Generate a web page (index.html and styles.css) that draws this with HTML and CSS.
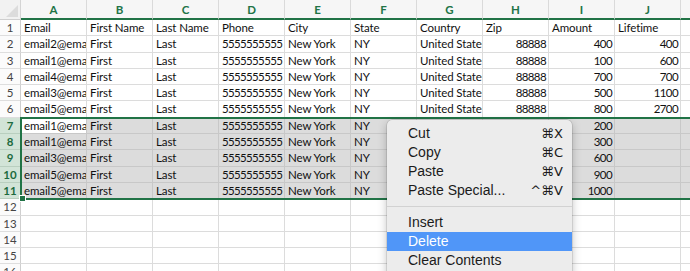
FILE: index.html
```html
<!DOCTYPE html>
<html lang="en">
<head>
    <meta charset="UTF-8">
    <title>Sheet</title>
    <link rel="stylesheet" href="styles.css">
</head>
<body>
    <div class="sheet">
        <div class="hdr">
            <div class="corner"></div>
            <div class="col">A</div><div class="col">B</div><div class="col">C</div><div class="col">D</div><div class="col">E</div>
            <div class="col">F</div><div class="col">G</div><div class="col">H</div><div class="col">I</div><div class="col">J</div><div class="col"></div>
        </div>

        <div class="row"><div class="rh">1</div><div class="c">Email</div><div class="c">First Name</div><div class="c">Last Name</div><div class="c">Phone</div><div class="c">City</div><div class="c">State</div><div class="c">Country</div><div class="c">Zip</div><div class="c">Amount</div><div class="c">Lifetime</div><div class="c"></div></div>
        <div class="row"><div class="rh">2</div><div class="c">email2@email.com</div><div class="c">First</div><div class="c">Last</div><div class="c ph">5555555555</div><div class="c">New York</div><div class="c">NY</div><div class="c">United States</div><div class="c num">88888</div><div class="c num">400</div><div class="c num">400</div><div class="c"></div></div>
        <div class="row"><div class="rh">3</div><div class="c">email1@email.com</div><div class="c">First</div><div class="c">Last</div><div class="c ph">5555555555</div><div class="c">New York</div><div class="c">NY</div><div class="c">United States</div><div class="c num">88888</div><div class="c num">100</div><div class="c num">600</div><div class="c"></div></div>
        <div class="row"><div class="rh">4</div><div class="c">email4@email.com</div><div class="c">First</div><div class="c">Last</div><div class="c ph">5555555555</div><div class="c">New York</div><div class="c">NY</div><div class="c">United States</div><div class="c num">88888</div><div class="c num">700</div><div class="c num">700</div><div class="c"></div></div>
        <div class="row"><div class="rh">5</div><div class="c">email3@email.com</div><div class="c">First</div><div class="c">Last</div><div class="c ph">5555555555</div><div class="c">New York</div><div class="c">NY</div><div class="c">United States</div><div class="c num">88888</div><div class="c num">500</div><div class="c num">1100</div><div class="c"></div></div>
        <div class="row"><div class="rh">6</div><div class="c">email5@email.com</div><div class="c">First</div><div class="c">Last</div><div class="c ph">5555555555</div><div class="c">New York</div><div class="c">NY</div><div class="c">United States</div><div class="c num">88888</div><div class="c num">800</div><div class="c num">2700</div><div class="c"></div></div>

        <div class="selection">
            <div class="row"><div class="rh">7</div><div class="c active">email1@email.com</div><div class="c">First</div><div class="c">Last</div><div class="c ph">5555555555</div><div class="c">New York</div><div class="c">NY</div><div class="c">United States</div><div class="c num">88888</div><div class="c num">200</div><div class="c"></div><div class="c"></div></div>
            <div class="row"><div class="rh">8</div><div class="c">email1@email.com</div><div class="c">First</div><div class="c">Last</div><div class="c ph">5555555555</div><div class="c">New York</div><div class="c">NY</div><div class="c">United States</div><div class="c num">88888</div><div class="c num">300</div><div class="c"></div><div class="c"></div></div>
            <div class="row"><div class="rh">9</div><div class="c">email3@email.com</div><div class="c">First</div><div class="c">Last</div><div class="c ph">5555555555</div><div class="c">New York</div><div class="c">NY</div><div class="c">United States</div><div class="c num">88888</div><div class="c num">600</div><div class="c"></div><div class="c"></div></div>
            <div class="row"><div class="rh">10</div><div class="c">email5@email.com</div><div class="c">First</div><div class="c">Last</div><div class="c ph">5555555555</div><div class="c">New York</div><div class="c">NY</div><div class="c">United States</div><div class="c num">88888</div><div class="c num">900</div><div class="c"></div><div class="c"></div></div>
            <div class="row"><div class="rh">11</div><div class="c">email5@email.com</div><div class="c">First</div><div class="c">Last</div><div class="c ph">5555555555</div><div class="c">New York</div><div class="c">NY</div><div class="c">United States</div><div class="c num">88888</div><div class="c num">1000</div><div class="c"></div><div class="c"></div></div>
            <span class="handle"></span>
        </div>

        <div class="row"><div class="rh">12</div><div class="c"></div><div class="c"></div><div class="c"></div><div class="c"></div><div class="c"></div><div class="c"></div><div class="c"></div><div class="c"></div><div class="c"></div><div class="c"></div><div class="c"></div></div>
        <div class="row"><div class="rh">13</div><div class="c"></div><div class="c"></div><div class="c"></div><div class="c"></div><div class="c"></div><div class="c"></div><div class="c"></div><div class="c"></div><div class="c"></div><div class="c"></div><div class="c"></div></div>
        <div class="row"><div class="rh">14</div><div class="c"></div><div class="c"></div><div class="c"></div><div class="c"></div><div class="c"></div><div class="c"></div><div class="c"></div><div class="c"></div><div class="c"></div><div class="c"></div><div class="c"></div></div>
        <div class="row"><div class="rh">15</div><div class="c"></div><div class="c"></div><div class="c"></div><div class="c"></div><div class="c"></div><div class="c"></div><div class="c"></div><div class="c"></div><div class="c"></div><div class="c"></div><div class="c"></div></div>
        <div class="row"><div class="rh">16</div><div class="c"></div><div class="c"></div><div class="c"></div><div class="c"></div><div class="c"></div><div class="c"></div><div class="c"></div><div class="c"></div><div class="c"></div><div class="c"></div><div class="c"></div></div>
    </div>

    <div class="menu">
        <div class="item"><span>Cut</span><span class="key">⌘X</span></div>
        <div class="item"><span>Copy</span><span class="key">⌘C</span></div>
        <div class="item"><span>Paste</span><span class="key">⌘V</span></div>
        <div class="item"><span>Paste Special...</span><span class="key">^⌘V</span></div>
        <div class="sep"></div>
        <div class="item"><span>Insert</span></div>
        <div class="item hl"><span>Delete</span></div>
        <div class="item"><span>Clear Contents</span></div>
    </div>
</body>
</html>
```

FILE: styles.css
```css
body {
    margin: 0;
    width: 690px;
    height: 271px;
    overflow: hidden;
    position: relative;
    background: #fff;
    font-family: Lato, "Open Sans", sans-serif;
    font-size: 11.5px;
    color: #111;
}

.sheet {
    width: 747px;
}

.hdr {
    display: flex;
    height: 20px;
}

.corner {
    width: 21px;
    flex: none;
    box-sizing: border-box;
    background: #f2f2f2;
    border-right: 1px solid #d4d4d4;
    border-bottom: 1px solid #cfcfcf;
    position: relative;
}

.corner::after {
    content: "";
    position: absolute;
    right: 2px;
    bottom: 2px;
    border-left: 12px solid transparent;
    border-bottom: 12px solid #dcdcdc;
}

.col {
    width: 66px;
    flex: none;
    box-sizing: border-box;
    background: #f6f6f6;
    border-right: 1px solid #dadada;
    border-bottom: 2px solid #217346;
    color: #217346;
    font-weight: bold;
    text-align: center;
    line-height: 19px;
}

.row {
    display: flex;
    height: 16.3px;
}

.rh {
    width: 21px;
    flex: none;
    box-sizing: border-box;
    border-right: 1px solid #cfcfcf;
    border-bottom: 1px solid #dedede;
    background: #fbfbfb;
    color: #444;
    text-align: center;
    line-height: 16px;
}

.c {
    width: 66px;
    flex: none;
    box-sizing: border-box;
    padding: 0 2px 0 3px;
    border-right: 1px solid #dcdcdc;
    border-bottom: 1px solid #dcdcdc;
    overflow: hidden;
    white-space: nowrap;
    line-height: 16px;
    letter-spacing: -0.1px;
}

.num {
    text-align: right;
    letter-spacing: -0.6px;
}

.ph {
    letter-spacing: -0.65px;
}

.selection {
    position: relative;
}

.selection::after {
    content: "";
    position: absolute;
    left: 20px;
    top: -1px;
    right: 0;
    bottom: -1px;
    border: 2px solid #217346;
    border-right: none;
}

.selection .c {
    background: #dcdcdc;
    border-color: #c8c8c8;
}

.selection .c.active {
    background: #fff;
}

.selection .rh {
    background: #d2e4d7;
    color: #1d6b3e;
    font-weight: bold;
    border-bottom-color: #b9cfbf;
}

.handle {
    position: absolute;
    left: 19px;
    bottom: -3px;
    width: 5px;
    height: 5px;
    background: #217346;
    border: 1px solid #fff;
    z-index: 2;
}

.menu {
    position: absolute;
    left: 387px;
    top: 120px;
    width: 185px;
    height: 170px;
    box-sizing: border-box;
    padding-top: 4px;
    background: #ececec;
    border-radius: 5px;
    box-shadow: 0 0 0 0.5px rgba(0, 0, 0, 0.18), 0 3px 10px rgba(0, 0, 0, 0.25);
    font-family: "Liberation Sans", "DejaVu Sans", sans-serif;
    font-size: 14px;
    color: #1b1b1b;
}

.item {
    display: flex;
    justify-content: space-between;
    height: 19px;
    line-height: 19px;
    padding: 0 9px 0 21px;
}

.key {
    font-family: "DejaVu Sans", sans-serif;
    font-size: 13px;
}

.item.hl {
    background: #5096f8;
    color: #fff;
}

.sep {
    height: 13px;
    box-sizing: border-box;
    padding-top: 6px;
}

.sep::before {
    content: "";
    display: block;
    border-top: 1px solid #d2d2d2;
}
```
